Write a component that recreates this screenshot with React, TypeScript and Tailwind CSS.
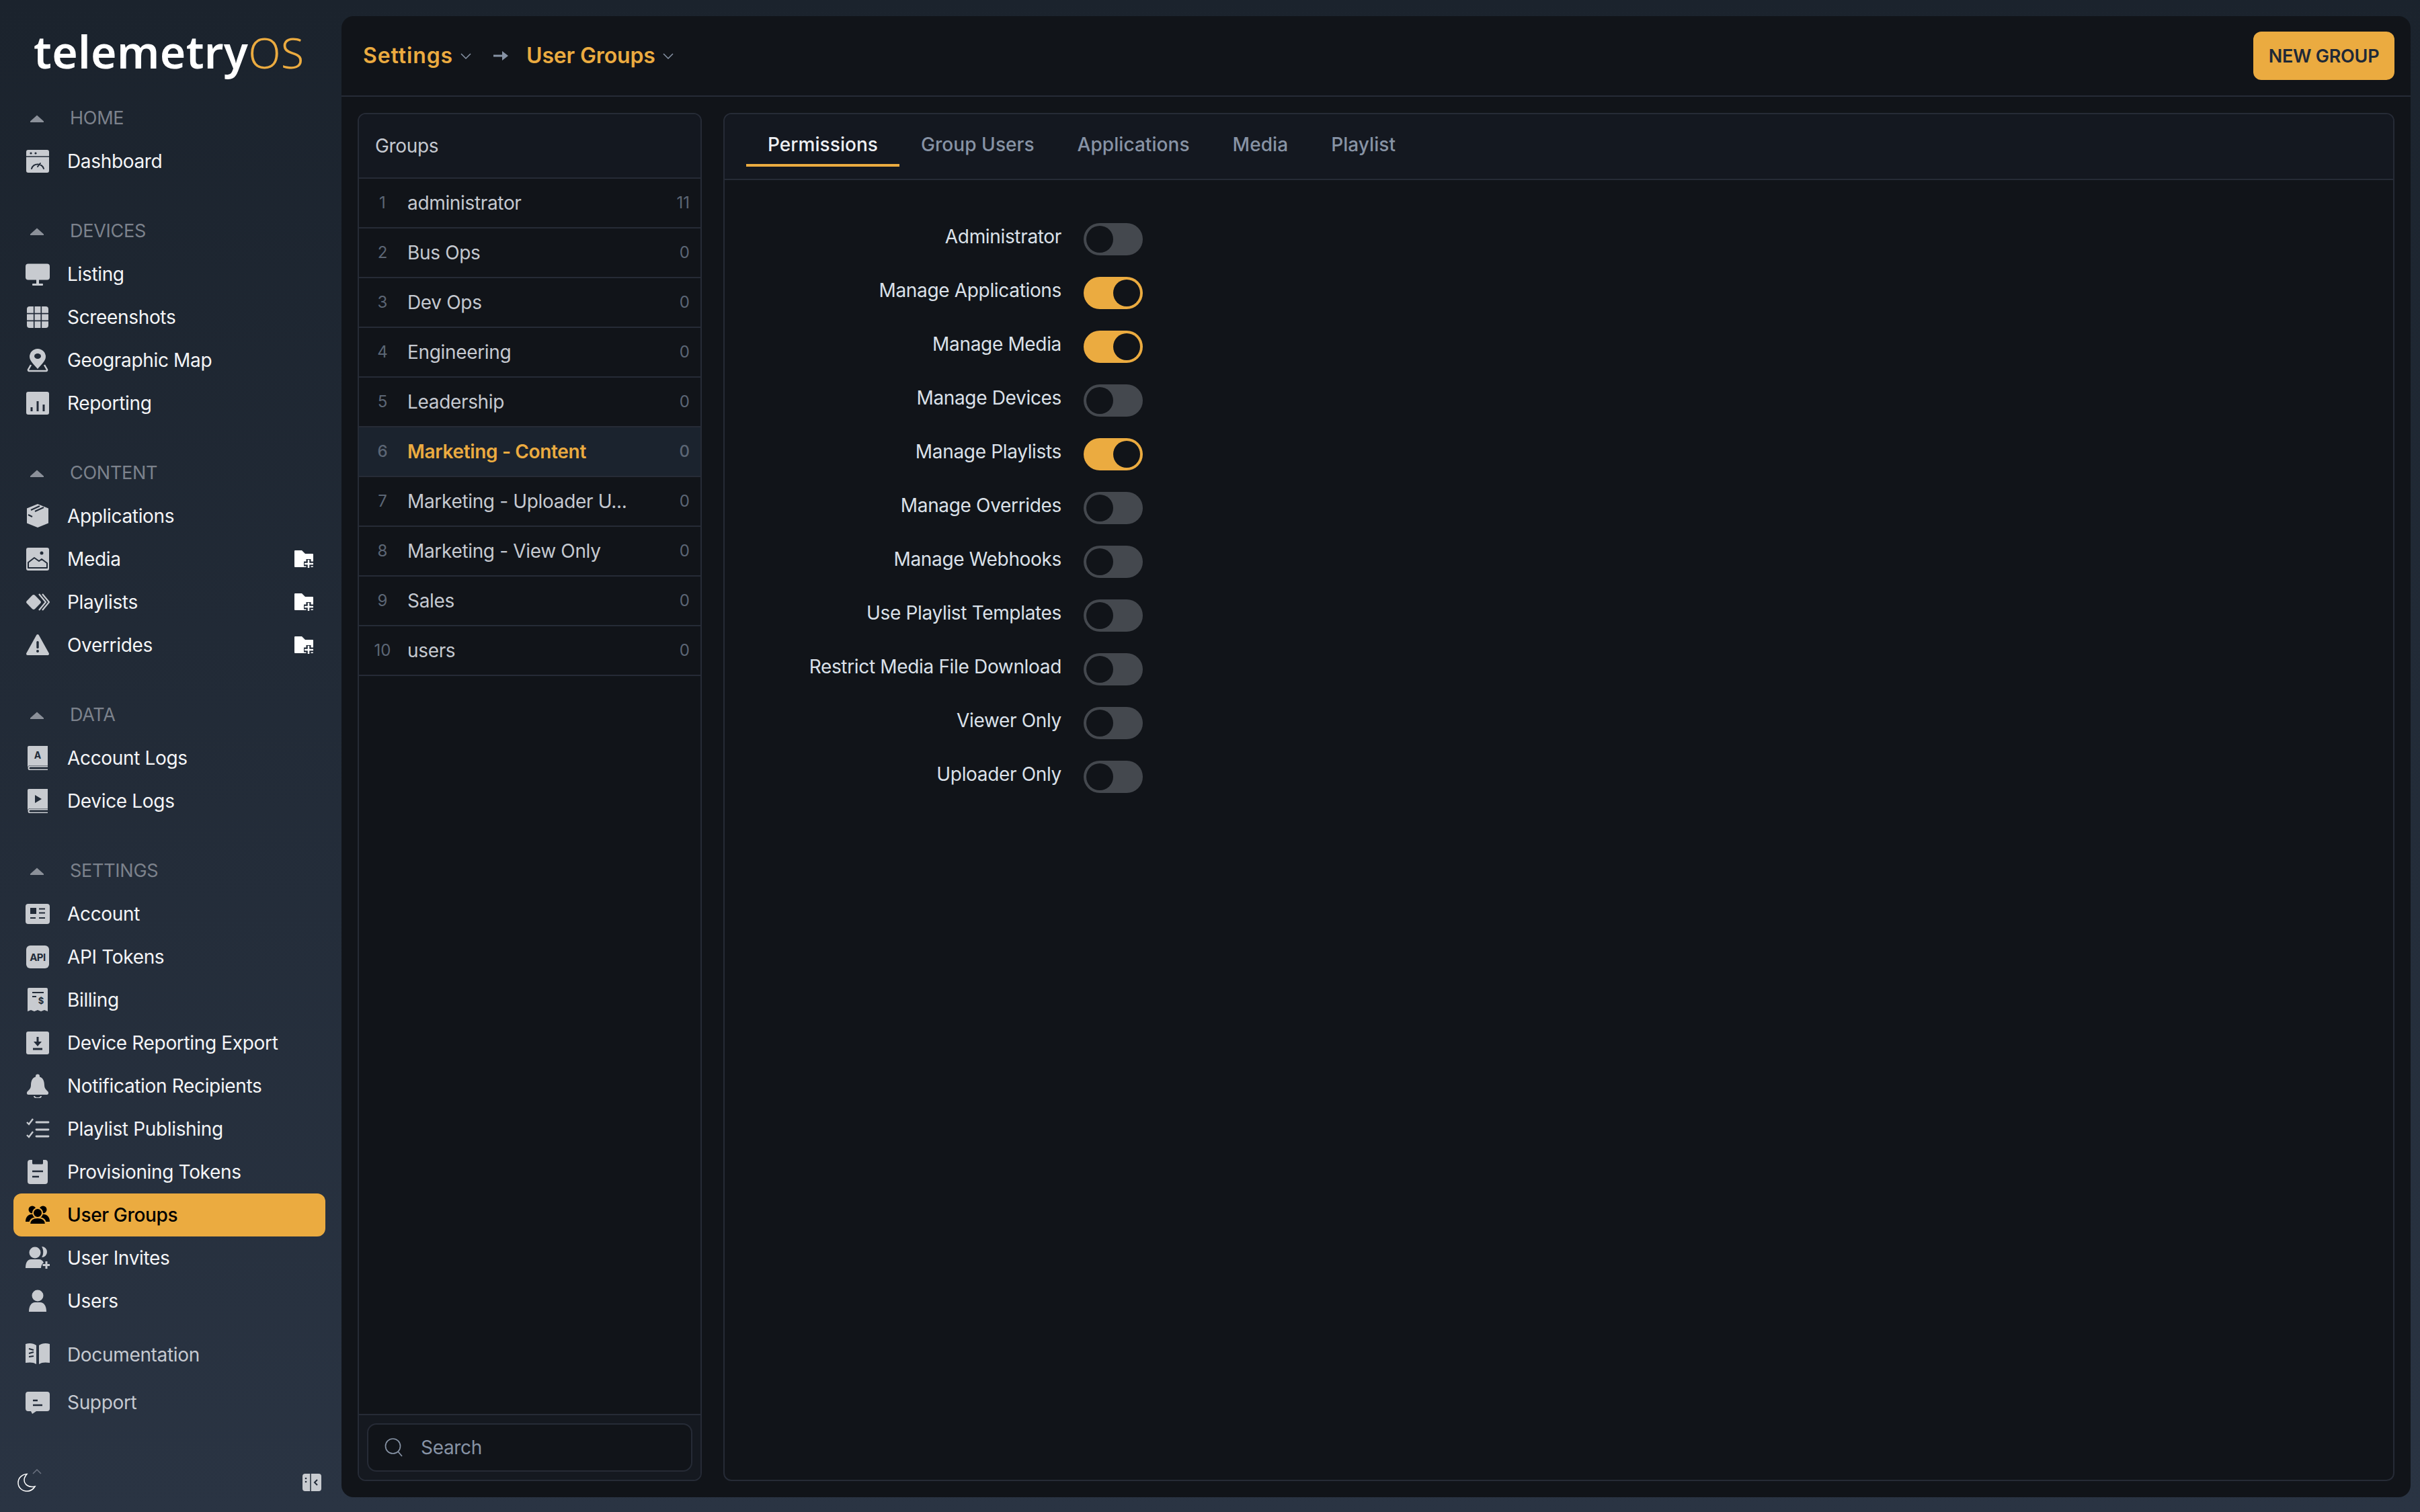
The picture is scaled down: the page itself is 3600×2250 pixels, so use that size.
import type { ReactNode } from "react";

const DARK = "#222b38";

function Icon({ children, className = "text-[#c8cbd0]" }: { children: ReactNode; className?: string }) {
  return (
    <svg viewBox="0 0 36 36" className={`h-9 w-9 shrink-0 ${className}`} fill="currentColor">
      {children}
    </svg>
  );
}

const icons: Record<string, ReactNode> = {
  dashboard: (
    <>
      <rect x="1" y="1" width="34" height="34" rx="3" />
      <path d="M1 11h34" stroke={DARK} strokeWidth="1.5" />
      <circle cx="8" cy="6" r="1.6" fill={DARK} />
      <circle cx="15" cy="6" r="1.6" fill={DARK} />
      <path d="M9 29a9.500 9.500 0 0 1 18 0M18 26l4-5" fill="none" stroke={DARK} strokeWidth="2" strokeLinecap="round" />
    </>
  ),
  listing: (
    <>
      <rect x="0" y="2.500" width="36" height="24" rx="4" />
      <rect x="16" y="24" width="4" height="9" />
      <rect x="10" y="32" width="16" height="3" rx="1" />
    </>
  ),
  screenshots: (
    <>
      <rect x="2" y="2" width="32" height="32" rx="4" />
      <path d="M12.700 2v32M23.300 2v32M2 12.700h32M2 23.300h32" stroke={DARK} strokeWidth="1.700" />
    </>
  ),
  map: (
    <>
      <path d="M18 1a12 12 0 0 1 12 12c0 6-7 12-12 18C13 25 6 19 6 13A12 12 0 0 1 18 1z" />
      <ellipse cx="18" cy="12" rx="5" ry="4" fill={DARK} />
      <path d="M8 25l-4 7a1.500 1.500 0 0 0 1 2h26a1.500 1.500 0 0 0 1-2l-4-7" fill="none" stroke="currentColor" strokeWidth="2.500" />
    </>
  ),
  reporting: (
    <>
      <rect x="1" y="1" width="34" height="34" rx="3" />
      <path d="M9 24v6M18 15v15M27 20v10" stroke={DARK} strokeWidth="3" />
    </>
  ),
  applications: (
    <>
      <path d="M18 0l16 6.500v22L18 35 2 28.500v-22z" />
      <path d="M8 9l13-6M14 11l13-6M4 16l6 3" stroke={DARK} strokeWidth="2" fill="none" />
    </>
  ),
  media: (
    <>
      <rect x="1" y="1" width="34" height="34" rx="3" />
      <circle cx="24" cy="9" r="2.500" fill={DARK} />
      <path d="M4 31v-8l9-7 7 5 4-3 8 6v7z" fill="none" stroke={DARK} strokeWidth="2" strokeLinejoin="round" />
    </>
  ),
  playlists: (
    <>
      <rect x="3.500" y="9.500" width="17" height="17" rx="3" transform="rotate(45 12 18)" />
      <path d="M20 6l10 12-10 12M25 6l10 12-10 12" fill="none" stroke="currentColor" strokeWidth="2.200" />
    </>
  ),
  overrides: (
    <>
      <path d="M18 4l15 27H3z" stroke="currentColor" strokeWidth="4" strokeLinejoin="round" />
      <rect x="16.300" y="12" width="3.400" height="11" rx="1.500" fill={DARK} />
      <circle cx="18" cy="27" r="2" fill={DARK} />
    </>
  ),
  accountLogs: (
    <>
      <path d="M3 2a2 2 0 0 1 2-2h28v29H7a4 4 0 0 0-4 3z" />
      <path d="M33 30.500H7a2.500 2.500 0 0 0 0 5h26" fill="none" stroke="currentColor" strokeWidth="2" />
      <text x="18" y="19" textAnchor="middle" fontSize="14" fontWeight="700" fill={DARK}>A</text>
    </>
  ),
  deviceLogs: (
    <>
      <path d="M3 2a2 2 0 0 1 2-2h28v29H7a4 4 0 0 0-4 3z" />
      <path d="M33 30.500H7a2.500 2.500 0 0 0 0 5h26" fill="none" stroke="currentColor" strokeWidth="2" />
      <path d="M14 9l10 6-10 6z" fill={DARK} />
    </>
  ),
  account: (
    <>
      <rect x="0" y="3" width="36" height="30" rx="4" />
      <rect x="7" y="9" width="9" height="9" fill={DARK} />
      <path d="M20 10.500h9M20 16.500h9M7 24h8M20 24h9" stroke={DARK} strokeWidth="2" />
    </>
  ),
  api: (
    <>
      <rect x="1" y="1" width="34" height="34" rx="6" />
      <text x="18" y="23.500" textAnchor="middle" fontSize="15" fontWeight="700" fill={DARK} letterSpacing="-0.5">API</text>
    </>
  ),
  billing: (
    <>
      <path d="M5 0h26a2 2 0 0 1 2 2v33l-5-2-5 2-5-2-5 2-5-2-5 2V2a2 2 0 0 1 2-2z" />
      <path d="M10 7h17M10 13h6" stroke={DARK} strokeWidth="2" />
      <text x="23" y="24" textAnchor="middle" fontSize="13" fontWeight="700" fill={DARK}>$</text>
    </>
  ),
  exportIcon: (
    <>
      <rect x="1" y="1" width="34" height="34" rx="3" />
      <path d="M18 9v10" stroke={DARK} strokeWidth="3" />
      <path d="M12 16h12l-6 7z" fill={DARK} />
      <path d="M11 27h14" stroke={DARK} strokeWidth="3" />
    </>
  ),
  bell: (
    <>
      <circle cx="18" cy="3.500" r="3" />
      <path d="M18 4c-8 0-10 7-10 13 0 4-2 6-5 9-2 2-1 5 1 5h28c2 0 3-3 1-5-3-3-5-5-5-9 0-6-2-13-10-13z" />
      <path d="M13 33a5 3 0 0 0 10 0" fill="none" stroke="currentColor" strokeWidth="2" />
    </>
  ),
  checklist: (
    <>
      <path d="M2 8l3 3 6-8M2 27l3 3 6-8" fill="none" stroke="currentColor" strokeWidth="2.400" />
      <path d="M16 8h18M16 19h18M16 29h18" stroke="currentColor" strokeWidth="2.800" strokeLinecap="round" />
    </>
  ),
  clipboard: (
    <>
      <rect x="3" y="0" width="30" height="36" rx="4" />
      <path d="M10 0v5a1.500 1.500 0 0 0 1.500 1.500h13A1.500 1.500 0 0 0 26 5V0" fill={DARK} />
      <path d="M10 17h16M10 25h10" stroke={DARK} strokeWidth="2.500" />
    </>
  ),
  userGroups: (
    <>
      <circle cx="10" cy="10" r="5.500" />
      <circle cx="26" cy="10" r="5.500" />
      <path d="M0 28c0-7 4-11 9-11h18c5 0 9 4 9 11l-5 0H5z" />
      <circle cx="18" cy="15" r="7" stroke="#ebab40" strokeWidth="2" />
      <path d="M6 32c0-7 5-10 12-10s12 3 12 10z" stroke="#ebab40" strokeWidth="2" />
    </>
  ),
  invites: (
    <>
      <path d="M24 1a8 8 0 0 1 0 16c3-4 3-12 0-16z" />
      <circle cx="14" cy="10" r="8.500" />
      <path d="M0 33c0-8 3-13 8-13h12c3 0 6 2 7 5-2 1-4 4-4 8z" />
      <path d="M31 23v11M25.500 28.500h11" stroke="currentColor" strokeWidth="3" />
    </>
  ),
  user: (
    <>
      <circle cx="18" cy="10" r="8.500" />
      <path d="M5 34c0-9 4-14 9-14h8c5 0 9 5 9 14z" />
    </>
  ),
  docs: (
    <>
      <path d="M0 2c6-2 12-1 16 2v28c-4-3-10-3-16-2zM36 2c-6-2-12-1-16 2v28c4-3 10-3 16-2z" />
      <path d="M5 9l7 2M5 16l7-2M5 21l7-1" stroke={DARK} strokeWidth="2" />
    </>
  ),
  support: (
    <>
      <path d="M4 2h28a4 4 0 0 1 4 4v21a4 4 0 0 1-4 4H16l-6 4-2-4H4a4 4 0 0 1-4-4V6a4 4 0 0 1 4-4z" />
      <path d="M11 15h7M11 22h14" stroke={DARK} strokeWidth="2.500" />
    </>
  ),
};

type NavItem = { label: string; icon: string; add?: boolean; active?: boolean };

const sections: { title: string; items: NavItem[] }[] = [
  { title: "HOME", items: [{ label: "Dashboard", icon: "dashboard" }] },
  {
    title: "DEVICES",
    items: [
      { label: "Listing", icon: "listing" },
      { label: "Screenshots", icon: "screenshots" },
      { label: "Geographic Map", icon: "map" },
      { label: "Reporting", icon: "reporting" },
    ],
  },
  {
    title: "CONTENT",
    items: [
      { label: "Applications", icon: "applications" },
      { label: "Media", icon: "media", add: true },
      { label: "Playlists", icon: "playlists", add: true },
      { label: "Overrides", icon: "overrides", add: true },
    ],
  },
  {
    title: "DATA",
    items: [
      { label: "Account Logs", icon: "accountLogs" },
      { label: "Device Logs", icon: "deviceLogs" },
    ],
  },
  {
    title: "SETTINGS",
    items: [
      { label: "Account", icon: "account" },
      { label: "API Tokens", icon: "api" },
      { label: "Billing", icon: "billing" },
      { label: "Device Reporting Export", icon: "exportIcon" },
      { label: "Notification Recipients", icon: "bell" },
      { label: "Playlist Publishing", icon: "checklist" },
      { label: "Provisioning Tokens", icon: "clipboard" },
      { label: "User Groups", icon: "userGroups", active: true },
      { label: "User Invites", icon: "invites" },
      { label: "Users", icon: "user" },
    ],
  },
];

const groups = [
  { name: "administrator", count: 11 },
  { name: "Bus Ops", count: 0 },
  { name: "Dev Ops", count: 0 },
  { name: "Engineering", count: 0 },
  { name: "Leadership", count: 0 },
  { name: "Marketing - Content", count: 0, active: true },
  { name: "Marketing - Uploader U...", count: 0 },
  { name: "Marketing - View Only", count: 0 },
  { name: "Sales", count: 0 },
  { name: "users", count: 0 },
];

const permissions = [
  { label: "Administrator", on: false },
  { label: "Manage Applications", on: true },
  { label: "Manage Media", on: true },
  { label: "Manage Devices", on: false },
  { label: "Manage Playlists", on: true },
  { label: "Manage Overrides", on: false },
  { label: "Manage Webhooks", on: false },
  { label: "Use Playlist Templates", on: false },
  { label: "Restrict Media File Download", on: false },
  { label: "Viewer Only", on: false },
  { label: "Uploader Only", on: false },
];

const tabs = ["Permissions", "Group Users", "Applications", "Media", "Playlist"];

function FolderPlus() {
  return (
    <svg viewBox="0 0 28 26" className="h-[26px] w-7 shrink-0">
      <path d="M1 0h10l5 5h11a1 1 0 0 1 1 1v18a1 1 0 0 1-1 1H1a1 1 0 0 1-1-1V1a1 1 0 0 1 1-1z" fill="#fff" />
      <path d="M21 13v13M14 20h14" stroke={DARK} strokeWidth="7" />
      <path d="M21 14v12M15 20h13" stroke="#fff" strokeWidth="2.500" />
    </svg>
  );
}

function SectionHeader({ title }: { title: string }) {
  return (
    <div className="flex h-16 items-center pl-[45px]">
      <svg viewBox="0 0 20 11" className="h-[11px] w-5">
        <path d="M10 0.500L19.500 9a1 1 0 0 1-.5 2H1a1 1 0 0 1-.5-2z" fill="#8b9099" />
      </svg>
      <span className="ml-[39px] text-[27px] tracking-[-0.01em] text-[#7c828c]">{title}</span>
    </div>
  );
}

function NavRow({ item }: { item: NavItem }) {
  return (
    <div
      className={`ml-5 mr-6 flex h-16 items-center rounded-xl pl-[18px] pr-[18px] ${
        item.active ? "bg-[#ebab40] font-medium text-black" : "text-[#f4f5f7]"
      }`}
    >
      <Icon className={item.active ? "text-black" : "text-[#c8cbd0]"}>{icons[item.icon]}</Icon>
      <span className="ml-[26px] flex-1 text-[28px] tracking-[-0.012em]">{item.label}</span>
      {item.add && <FolderPlus />}
    </div>
  );
}

function Sidebar() {
  return (
    <aside className="flex w-[508px] shrink-0 flex-col">
      <div className="flex h-[144px] items-baseline pl-[50px] pt-[32px] leading-[88px] [font-family:'Noto_Sans',sans-serif]">
        <span className="text-[66px] font-semibold tracking-[0.005em] text-white">telemetry</span>
        <span className="text-[63px] font-light text-[#ebab40]">OS</span>
      </div>
      <div className="flex flex-col gap-10">
        {sections.map((section) => (
          <div key={section.title}>
            <SectionHeader title={section.title} />
            {section.items.map((item) => (
              <NavRow key={item.label} item={item} />
            ))}
          </div>
        ))}
      </div>
      <div className="mx-5 mt-4 flex h-16 items-center pl-[18px] text-[#c5c9d0]">
        <Icon>{icons.docs}</Icon>
        <span className="ml-[26px] text-[28px] tracking-[-0.012em]">Documentation</span>
      </div>
      <div className="mx-5 mt-[7px] flex h-16 items-center pl-[18px] text-[#c5c9d0]">
        <Icon>{icons.support}</Icon>
        <span className="ml-[26px] text-[28px] tracking-[-0.012em]">Support</span>
      </div>
      <div className="mb-3 mt-auto flex h-16 items-center justify-between pl-[26px] pr-[30px]">
        <div className="relative">
          <svg viewBox="0 0 28 28" className="h-7 w-7" fill="none" stroke="#fff" strokeWidth="1.500">
            <path d="M14 1.500C7 2 1 7 1 14.500 1 22 7 27 14 27c5 0 9-2 12-7-8 2-16-2-16-10 0-3 2-6 4-8.500z" />
          </svg>
          <svg viewBox="0 0 14 8" className="absolute -top-[6px] left-[22px] h-2 w-[14px]" fill="none" stroke="#6b7280" strokeWidth="1.500">
            <path d="M1 7l6-6 6 6" />
          </svg>
        </div>
        <svg viewBox="0 0 28 26" className="h-[26px] w-7">
          <rect width="28" height="26" rx="4" fill="#c8cbd0" />
          <path d="M12 0v26" stroke={DARK} strokeWidth="1.500" />
          <circle cx="5" cy="7" r="1.300" fill={DARK} />
          <circle cx="5" cy="12" r="1.300" fill={DARK} />
          <path d="M22 9l-4 4 4 4" fill="none" stroke={DARK} strokeWidth="2" />
        </svg>
      </div>
    </aside>
  );
}

function Toggle({ on }: { on: boolean }) {
  return (
    <div className={`flex h-12 w-[88px] items-center rounded-full p-1 ${on ? "justify-end bg-[#ebab40]" : "justify-start bg-[#44484e]"}`}>
      <div className="h-10 w-10 rounded-full bg-[#111419]" />
    </div>
  );
}

function GroupsPanel() {
  return (
    <div className="flex w-[512px] shrink-0 flex-col overflow-hidden rounded-xl border-2 border-[#262b36]">
      <div className="flex h-[96px] shrink-0 items-center border-b-2 border-[#262b36] bg-[#141820] pl-6 text-[28px] tracking-[-0.012em] text-[#c5c9d0]">
        Groups
      </div>
      <div className="flex-1">
        {groups.map((group, i) => (
          <div
            key={group.name}
            className={`flex h-[74px] items-center border-b-2 border-[#262b36] ${group.active ? "bg-[#1b232e]" : ""}`}
          >
            <span className={`w-[72px] pr-[2px] text-center text-[24px] text-[#5c6675] ${group.active ? "font-medium" : ""}`}>{i + 1}</span>
            <span
              className={`whitespace-nowrap text-[28px] tracking-[-0.012em] ${
                group.active ? "font-semibold text-[#ebab40]" : "text-[#c5c9d0]"
              }`}
            >
              {group.name}
            </span>
            <span className={`ml-auto pr-4 text-[24px] text-[#5c6675] ${group.active ? "font-medium" : ""}`}>{group.count}</span>
          </div>
        ))}
      </div>
      <div className="flex h-[98px] shrink-0 items-center border-t-2 border-[#262b36] bg-[#151920] px-3">
        <div className="flex h-[72px] w-full items-center rounded-[14px] border-2 border-[#262b36] bg-[#111419] pl-6">
          <svg viewBox="0 0 28 28" className="h-7 w-7" fill="none" stroke="#8793a5" strokeWidth="1.700">
            <circle cx="12.500" cy="12" r="11" />
            <path d="M20 20l6 7" />
          </svg>
          <span className="ml-[26px] text-[28px] tracking-[-0.012em] text-[#8793a5]">Search</span>
        </div>
      </div>
    </div>
  );
}

function PermissionsPanel() {
  return (
    <div className="flex flex-1 flex-col overflow-hidden rounded-xl border-2 border-[#262b36]">
      <div className="flex h-[98px] shrink-0 border-b-2 border-[#262b36] bg-[#141820] pl-8">
        <div className="flex h-[78px]">
          {tabs.map((tab, i) => (
            <div
              key={tab}
              className={`flex items-center border-b-4 px-8 pt-4 text-[28px] font-medium tracking-[0.002em] ${
                i === 0 ? "border-[#ebab40] text-[#eef0f3]" : "border-transparent text-[#8793a5]"
              }`}
            >
              {tab}
            </div>
          ))}
        </div>
      </div>
      <div className="flex w-[622px] flex-col pt-12">
        {permissions.map((perm) => (
          <div key={perm.label} className="flex h-20 items-center justify-end gap-[33px]">
            <span className="-mt-2 text-[28px] tracking-[-0.012em] text-[#dbe1e9]">{perm.label}</span>
            <Toggle on={perm.on} />
          </div>
        ))}
      </div>
    </div>
  );
}

export default function App() {
  return (
    <div className="flex h-[2250px] w-[3600px] bg-gradient-to-b from-[#1b232d] to-[#2a3443] [font-family:Inter,sans-serif]">
      <Sidebar />
      <main className="mb-[22px] mr-[14px] mt-6 flex flex-1 flex-col rounded-[18px] bg-[#111419]">
        <header className="flex h-[120px] shrink-0 items-center border-b-2 border-[#262b36] pl-8 pr-6">
          <span className="text-[32px] font-semibold tracking-[0.028em] text-[#ebab40]">Settings</span>
          <svg viewBox="0 0 16 9" className="ml-[11px] h-[9px] w-4" fill="none" stroke="#8793a5" strokeWidth="1.500">
            <path d="M1 1l7 7 7-7" />
          </svg>
          <svg viewBox="0 0 22 14" className="ml-[33px] h-[14px] w-[22px]" fill="#8793a5">
            <path d="M0 5.500h13V0l9 7-9 7V8.500H0z" />
          </svg>
          <span className="ml-[27px] text-[32px] font-semibold tracking-[-0.005em] text-[#ebab40]">User Groups</span>
          <svg viewBox="0 0 16 9" className="ml-[11px] h-[9px] w-4" fill="none" stroke="#8793a5" strokeWidth="1.500">
            <path d="M1 1l7 7 7-7" />
          </svg>
          <button className="ml-auto h-[72px] w-[210px] rounded-xl bg-[#ebab40] pt-[2px] text-[27px] font-semibold tracking-[-0.01em] text-[#1f2937]">
            NEW GROUP
          </button>
        </header>
        <div className="flex min-h-0 flex-1 gap-8 p-6">
          <GroupsPanel />
          <PermissionsPanel />
        </div>
      </main>
    </div>
  );
}
